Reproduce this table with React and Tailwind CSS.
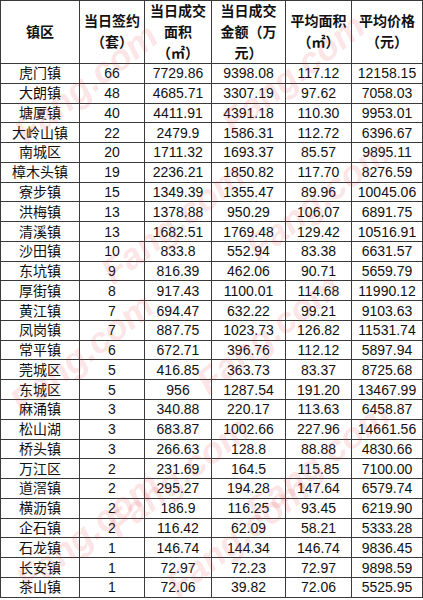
import React from 'react'

const rows = [
  ['虎门镇', '66', '7729.86', '9398.08', '117.12', '12158.15'],
  ['大朗镇', '48', '4685.71', '3307.19', '97.62', '7058.03'],
  ['塘厦镇', '40', '4411.91', '4391.18', '110.30', '9953.01'],
  ['大岭山镇', '22', '2479.9', '1586.31', '112.72', '6396.67'],
  ['南城区', '20', '1711.32', '1693.37', '85.57', '9895.11'],
  ['樟木头镇', '19', '2236.21', '1850.82', '117.70', '8276.59'],
  ['寮步镇', '15', '1349.39', '1355.47', '89.96', '10045.06'],
  ['洪梅镇', '13', '1378.88', '950.29', '106.07', '6891.75'],
  ['清溪镇', '13', '1682.51', '1769.48', '129.42', '10516.91'],
  ['沙田镇', '10', '833.8', '552.94', '83.38', '6631.57'],
  ['东坑镇', '9', '816.39', '462.06', '90.71', '5659.79'],
  ['厚街镇', '8', '917.43', '1100.01', '114.68', '11990.12'],
  ['黄江镇', '7', '694.47', '632.22', '99.21', '9103.63'],
  ['凤岗镇', '7', '887.75', '1023.73', '126.82', '11531.74'],
  ['常平镇', '6', '672.71', '396.76', '112.12', '5897.94'],
  ['莞城区', '5', '416.85', '363.73', '83.37', '8725.68'],
  ['东城区', '5', '956', '1287.54', '191.20', '13467.99'],
  ['麻涌镇', '3', '340.88', '220.17', '113.63', '6458.87'],
  ['松山湖', '3', '683.87', '1002.66', '227.96', '14661.56'],
  ['桥头镇', '3', '266.63', '128.8', '88.88', '4830.66'],
  ['万江区', '2', '231.69', '164.5', '115.85', '7100.00'],
  ['道滘镇', '2', '295.27', '194.28', '147.64', '6579.74'],
  ['横沥镇', '2', '186.9', '116.25', '93.45', '6219.90'],
  ['企石镇', '2', '116.42', '62.09', '58.21', '5333.28'],
  ['石龙镇', '1', '146.74', '144.34', '146.74', '9836.45'],
  ['长安镇', '1', '72.97', '72.23', '72.97', '9898.59'],
  ['茶山镇', '1', '72.06', '39.82', '72.06', '5525.95'],
]

const headers = [
  ['镇区'],
  ['当日签约', '（套）'],
  ['当日成交', '面积', '（㎡）'],
  ['当日成交', '金额（万', '元）'],
  ['平均面积', '（㎡）'],
  ['平均价格', '（元）'],
]

// watermark spots, kept inside the picture
const marks = [
  [8, 122], [215, 112], [95, 262], [240, 238], [4, 392],
  [190, 372], [100, 515], [240, 500], [10, 570], [160, 575],
]

export default function App() {
  return (
    <div className="relative w-[423px] h-[600px] overflow-hidden bg-white text-[14px] text-[#111]"
      style={{ fontFamily: '"Liberation Sans", "Noto Sans CJK SC", sans-serif' }}>
      <div className="grid grid-cols-[79px_65px_67px_74px_66px_71px] border-l border-t border-[#3a3a3a] w-[423px]">
        {headers.map((h, i) => (
          <div key={i} className="h-[63px] border-r border-b border-[#3a3a3a] flex flex-col items-center justify-center font-bold leading-[21px]">
            {h.map((line, j) => <span key={j} className="whitespace-nowrap">{line}</span>)}
          </div>
        ))}
        {rows.map((r, i) => r.map((c, j) => (
          <div key={i + '-' + j} className="h-[19.78px] border-r border-b border-[#3a3a3a] flex items-center justify-center leading-none whitespace-nowrap">
            {c}
          </div>
        )))}
      </div>

      {/* Fang.com watermarks */}
      {marks.map(([x, y], i) => (
        <div key={i} className="absolute pointer-events-none select-none flex flex-col items-start"
          style={{ left: x, top: y, transform: 'rotate(-38deg)', transformOrigin: 'left top' }}>
          <span className="text-[36px] font-bold italic leading-none text-[rgba(225,50,60,0.14)]">Fang.com</span>
        </div>
      ))}
    </div>
  )
}
